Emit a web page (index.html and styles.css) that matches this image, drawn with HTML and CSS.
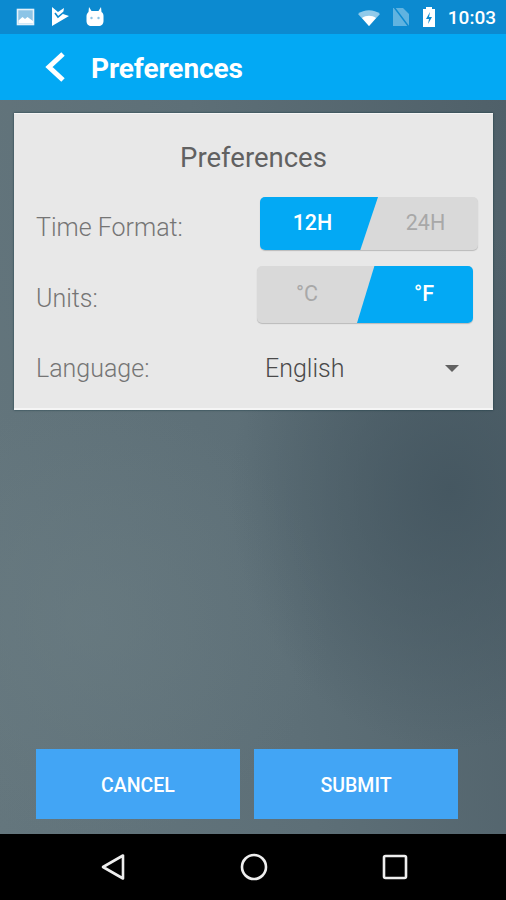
FILE: index.html
```html
<!DOCTYPE html>

<html>
    <head>
        <title>Preferences</title>
        <link rel="stylesheet" href="styles.css">
    </head>
    <body>
        <div class="status-bar">
            <div class="status-icons">
                <svg width="20" height="20" viewBox="0 0 20 20">
                    <rect x="1.500" y="2.500" width="16" height="15" fill="#8cc4e6" stroke="#e3f1fa" stroke-width="1.600"/>
                    <path d="M2.500 16.500v-3l4-3.500 2.500 2 2.500-2 5.500 4v2.500z" fill="#fff"/>
                </svg>
                <svg width="20" height="20" viewBox="0 0 20 20">
                    <path d="M1 0l6 5 6-4-1 6 6 2L1 19z" fill="#fff"/>
                    <path d="M4 6l3 4 6-5" fill="none" stroke="#0c8ad0" stroke-width="1.600"/>
                </svg>
                <svg width="20" height="20" viewBox="0 0 20 20">
                    <path d="M3 0l2.500 4h7L15 0l.5 5c1.500 1 2 2 2 4v5c0 3-2 5-5 5h-7c-3 0-5-2-5-5V9c0-2 1-3 2-4z" fill="#fff"/>
                    <circle cx="5.500" cy="11" r="1.200" fill="#8cc4e6"/>
                    <circle cx="12.500" cy="11" r="1.200" fill="#8cc4e6"/>
                </svg>
            </div>
            <div class="status-right">
                <svg width="24" height="18" viewBox="0 0 24 18">
                    <path d="M1 6c6-5 16-5 22 0L12 18z" fill="#fff" opacity="0.55"/>
                    <path d="M5 10c4-3 10-3 14 0l-7 8z" fill="#fff"/>
                </svg>
                <svg width="20" height="20" viewBox="0 0 20 20">
                    <path d="M2 1h10l6 6v12H2z" fill="#fff" opacity="0.35"/>
                    <path d="M3 0l15 20" stroke="#0c8ad0" stroke-width="1.500"/>
                </svg>
                <svg width="16" height="22" viewBox="0 0 16 22">
                    <path d="M5 1h6v2h3v18H2V3h3z" fill="#fff"/>
                    <path d="M9 6l-4 7h3l-1 5 4-7H8z" fill="#0c8ad0"/>
                </svg>
                <span class="clock">10:03</span>
            </div>
        </div>

        <div class="app-bar">
            <svg class="back" width="24" height="32" viewBox="0 0 24 32">
                <path d="M20 3L6 16l14 13" fill="none" stroke="#fff" stroke-width="5"/>
            </svg>
            <h1>Preferences</h1>
        </div>

        <div class="content">
            <div class="card">
                <h2>Preferences</h2>

                <div class="row row-time">
                    <span class="row-label">Time Format:</span>
                    <div class="toggle toggle-time">
                        <span class="seg seg-left active">12H</span>
                        <span class="seg seg-right">24H</span>
                    </div>
                </div>

                <div class="row row-units">
                    <span class="row-label">Units:</span>
                    <div class="toggle toggle-units">
                        <span class="seg seg-left">°C</span>
                        <span class="seg seg-right active">°F</span>
                    </div>
                </div>

                <div class="row row-lang">
                    <span class="row-label">Language:</span>
                    <div class="select">
                        <span>English</span>
                        <span class="caret"></span>
                    </div>
                </div>
            </div>

            <div class="actions">
                <button type="button">CANCEL</button>
                <button type="button">SUBMIT</button>
            </div>
        </div>

        <div class="nav-bar">
            <svg width="26" height="28" viewBox="0 0 26 28">
                <path d="M23 2.500v23L3 14z" fill="none" stroke="#eee" stroke-width="2.600" stroke-linejoin="round"/>
            </svg>
            <svg width="28" height="28" viewBox="0 0 28 28">
                <circle cx="14" cy="14" r="12" fill="none" stroke="#eee" stroke-width="2.600"/>
            </svg>
            <svg width="26" height="26" viewBox="0 0 26 26">
                <rect x="2" y="2" width="22" height="22" rx="1.500" fill="none" stroke="#eee" stroke-width="2.600"/>
            </svg>
        </div>
    </body>
</html>
```

FILE: styles.css
```css
html, body {
  height: 100%;
}

body {
  margin: 0;
  padding: 0;
  font-family: 'Roboto', Arial, sans-serif;
  display: flex;
  flex-direction: column;
  height: 900px;
  overflow: hidden;
}

.status-bar {
  height: 34px;
  flex: none;
  background: #0c8ad0;
  display: flex;
  justify-content: space-between;
  align-items: center;
  padding: 0 10px 0 16px;
}

.status-icons {
  display: flex;
  gap: 15px;
  align-items: center;
}

.status-right {
  display: flex;
  align-items: center;
  gap: 10px;
}

.clock {
  color: #fff;
  font-size: 19px;
  font-weight: 500;
  margin-left: 1px;
}

.app-bar {
  height: 66px;
  flex: none;
  background: #03a9f4;
  display: flex;
  align-items: center;
  padding-left: 43px;
  box-sizing: border-box;
}

.app-bar h1 {
  margin: 3px 0 0 24px;
  color: #fff;
  font-size: 28px;
  font-weight: 700;
  letter-spacing: -0.1px;
}

.content {
  flex: 1;
  display: flex;
  flex-direction: column;
  justify-content: space-between;
  padding: 13px 13px 15px 14px;
  background:
    radial-gradient(ellipse 220px 260px at 450px 390px, rgba(68, 86, 96, 0.9), rgba(68, 86, 96, 0) 100%),
    radial-gradient(ellipse 240px 220px at 90px 520px, rgba(108, 126, 132, 0.5), rgba(108, 126, 132, 0) 100%),
    linear-gradient(80deg, #64767d 0%, #5d6f77 50%, #4f6069 100%);
}

.card {
  background: #e8e8e8;
  height: 297px;
  box-sizing: border-box;
  padding: 26px 22px 0;
  border-top: 1px solid #f5f5f5;
  border-bottom: 2px solid #f5f5f5;
  box-shadow: 0 0 2px rgba(0, 40, 50, 0.7);
}

.card h2 {
  margin: 0;
  text-align: center;
  font-size: 27.5px;
  line-height: 36px;
  font-weight: 400;
  color: #616161;
}

.row {
  display: flex;
  align-items: center;
}

.row-label {
  font-size: 25px;
  font-weight: 300;
  color: #757575;
  padding-top: 8px;
}

.row-time {
  margin-top: 21px;
}

.row-units {
  margin-top: 16px;
}

.row-lang {
  margin-top: 23px;
}

.toggle {
  display: flex;
  margin-left: auto;
  background: #d9d9d9;
  border-radius: 5px;
  box-shadow: 0 1px 1px rgba(0, 0, 0, 0.2);
  font-size: 21.5px;
  color: #a8a8a8;
}

.toggle-time {
  width: 218px;
  height: 53px;
  margin-right: -7px;
}

.toggle-units {
  width: 216px;
  height: 57px;
  margin-right: -2px;
}

.seg {
  display: flex;
  align-items: center;
  justify-content: center;
  width: 50%;
  flex: none;
  box-sizing: border-box;
}

.seg.active {
  background: #03a9f4;
  color: #fff;
  font-weight: 500;
}

.toggle-time .seg-left {
  width: 118px;
  padding-right: 13px;
  padding-bottom: 3px;
  border-radius: 5px 0 0 5px;
  clip-path: polygon(0 0, 100% 0, 85% 100%, 0 100%);
}

.toggle-time .seg-right {
  width: 100px;
  padding-right: 5px;
  padding-bottom: 3px;
}

.toggle-units .seg-left {
  width: 100px;
  padding-bottom: 3px;
}

.toggle-units .seg-right {
  width: 116px;
  padding-left: 18px;
  padding-bottom: 3px;
  border-radius: 0 5px 5px 0;
  clip-path: polygon(15% 0, 100% 0, 100% 100%, 0 100%);
}

.select {
  width: 206px;
  margin-left: auto;
  display: flex;
  justify-content: space-between;
  align-items: center;
  font-size: 25px;
  font-weight: 300;
  color: #4a4a4a;
  box-sizing: border-box;
  padding: 8px 12px 0 0;
}

.caret {
  width: 0;
  height: 0;
  border-left: 7px solid transparent;
  border-right: 7px solid transparent;
  border-top: 7px solid #616161;
}

.actions {
  display: flex;
  gap: 14px;
  padding-left: 22px;
}

.actions button {
  width: 204px;
  height: 70px;
  border: none;
  background: #42a5f5;
  color: #fff;
  font-family: inherit;
  font-size: 19.5px;
  font-weight: 500;
  padding: 2px 0 0;
}

.nav-bar {
  height: 66px;
  flex: none;
  background: #000;
  display: flex;
  align-items: center;
  justify-content: space-between;
  padding: 0 98px 0 100px;
  box-sizing: border-box;
}
```
